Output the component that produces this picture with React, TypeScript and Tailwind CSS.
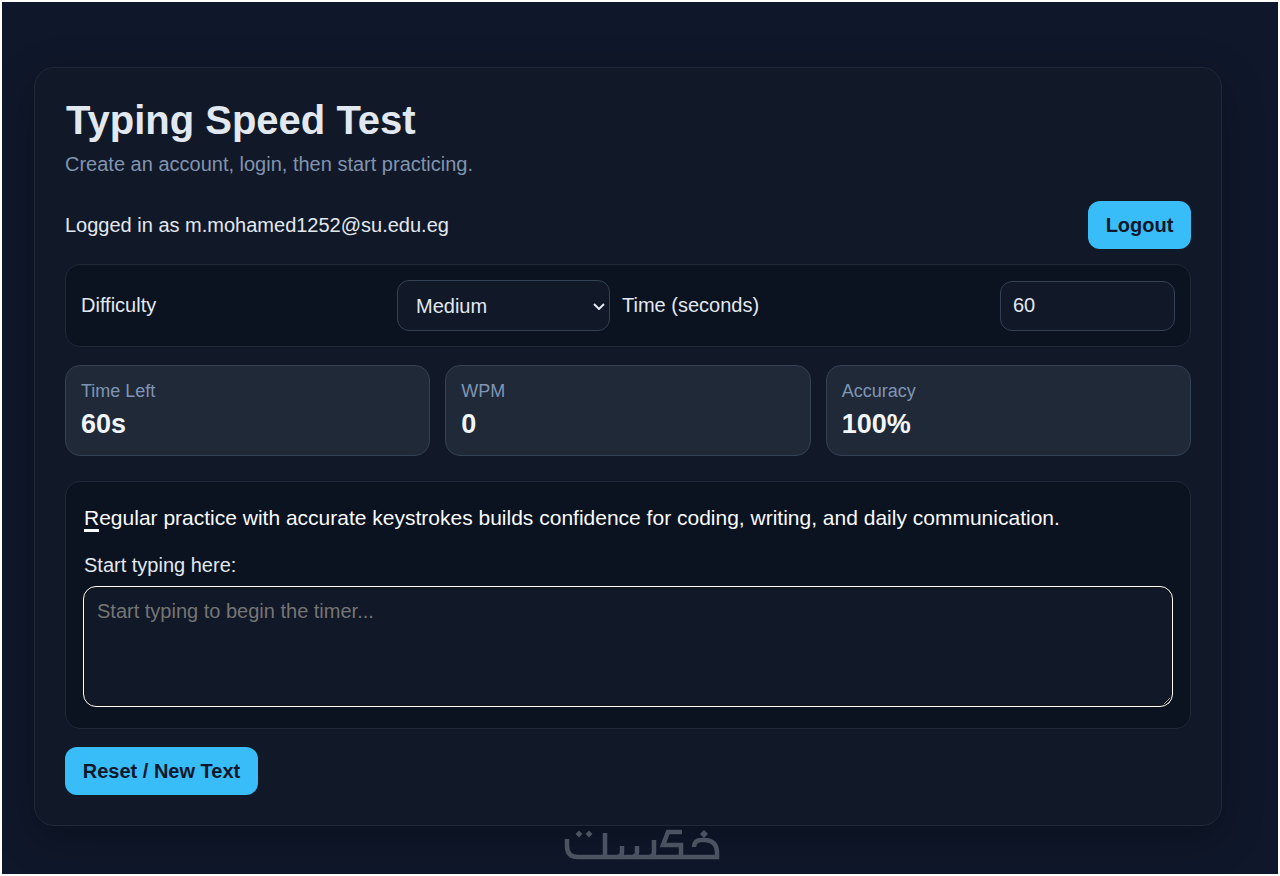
const sans = "font-['Liberation_Sans',Arial,sans-serif]";

function StatCard({ label, value }: { label: string; value: string }) {
  return (
    <div className="h-[91px] rounded-[15px] border border-[#334155] bg-[#1f2937] px-[15px] pt-[15px]">
      <div className="text-[18px] leading-[21px] text-[#7f95b5]">{label}</div>
      <div className="mt-[6px] text-[27px] leading-[32px] font-bold text-[#f1f5f9]">
        {value}
      </div>
    </div>
  );
}

// khamsat watermark, drawn by hand
function Watermark() {
  return (
    <svg
      className="absolute top-[824px] left-[561px] h-[36px] w-[158px]"
      viewBox="0 0 158 36"
      fill="none"
      stroke="#4b5361"
      strokeWidth="4.500"
      role="img"
      aria-label="خمسات"
    >
      <path d="M4 13v7q0 11 11 11H118" />
      <path d="M42 7V29M59 20v6q0 5 -5 5M74 20v6q0 5 -5 5M91 14v12q0 5 -5 5" />
      <path d="M119 6H105L100 19H118V31" />
      <path d="M118 31H154V27q0 -13 -13 -13H139q-8 0 -8 7" />
      <path
        d="M16 4.500l3.500 3.500l-3.500 3.500l-3.500 -3.500zM26 4.500l3.500 3.500l-3.500 3.500l-3.500 -3.500zM141 4l4 4l-4 4l-4 -4z"
        fill="#4b5361"
        stroke="none"
      />
    </svg>
  );
}

export default function App() {
  return (
    <div
      className={`relative h-[876px] w-[1280px] overflow-hidden border-2 border-white bg-[#0f172a] pt-[65px] pl-[32px] ${sans}`}
    >
      <div className="h-[759px] w-[1188px] rounded-[20px] border border-[#1f2937] bg-[#111827] px-[30px] pt-[30px] shadow-[0_12px_40px_rgba(0,0,0,0.25)]">
        <h1 className="ml-px -translate-y-px text-[40px] leading-[46px] font-bold text-[#e2e8f0]">
          Typing Speed Test
        </h1>
        <p className="mt-[9px] text-[20px] leading-[23px] text-[#8094b0]">
          Create an account, login, then start practicing.
        </p>

        <div className="mt-[25px] flex h-[48px] items-center justify-between">
          <span className="text-[20px] text-[#e2e8f0]">
            Logged in as m.mohamed1252@su.edu.eg
          </span>
          <button className="h-[48px] w-[103px] rounded-[12px] bg-[#38bdf8] text-[20px] font-bold text-[#0f172a]">
            Logout
          </button>
        </div>

        <div className="mt-[15px] grid h-[83px] grid-cols-[304px_213px_1fr_175px] items-center gap-3 rounded-[15px] border border-[#1f2937] bg-[#0b1220] px-[15px]">
          <label className="-translate-y-px text-[20px] text-[#e2e8f0]">Difficulty</label>
          <div className="relative">
            <select
              defaultValue="Medium"
              className="block h-[51px] w-full appearance-none rounded-[12px] border border-[#334155] bg-[#111827] px-[18px] text-[20px] text-[#e2e8f0]"
            >
              <option>Easy</option>
              <option>Medium</option>
              <option>Hard</option>
            </select>
            <svg
              className="pointer-events-none absolute top-[23px] right-[5px] h-[7px] w-[12px]"
              viewBox="0 0 12 7"
              fill="none"
              stroke="#e2e8f0"
              strokeWidth="2"
            >
              <path d="M1 1l5 5l5 -5" />
            </svg>
          </div>
          <label className="-translate-y-px text-[20px] text-[#e2e8f0]">Time (seconds)</label>
          <input
            defaultValue="60"
            className="h-[50px] rounded-[12px] border border-[#334155] bg-[#111827] px-[12px] text-[20px] text-[#e2e8f0]"
          />
        </div>

        <div className="mt-[18px] grid grid-cols-3 gap-[15px]">
          <StatCard label="Time Left" value="60s" />
          <StatCard label="WPM" value="0" />
          <StatCard label="Accuracy" value="100%" />
        </div>

        <div className="mt-[25px] h-[248px] rounded-[15px] border border-[#1f2937] bg-[#0b1220] px-[18px] pt-[23px]">
          <p className="text-[21px] leading-[26px] text-[#f8fafc]">
            <span className="border-b-[3px] border-[#f8fafc]">R</span>
            egular practice with accurate keystrokes builds confidence for
            coding, writing, and daily communication.
          </p>
          <label className="mt-[23px] block text-[20px] leading-[23px] text-[#e2e8f0]">
            Start typing here:
          </label>
          <textarea
            placeholder="Start typing to begin the timer..."
            className="mt-[10px] block h-[119px] w-full resize-y rounded-[12px] border border-[#161616] bg-[#111827] px-[12px] py-[12px] text-[20px] leading-[23px] text-[#e2e8f0] outline outline-white placeholder:text-[#757575]"
          />
        </div>

        <button className="mt-[18px] h-[48px] w-[193px] rounded-[12px] bg-[#38bdf8] text-[20px] font-bold text-[#0f172a]">
          Reset / New Text
        </button>
      </div>
      <Watermark />
    </div>
  );
}
